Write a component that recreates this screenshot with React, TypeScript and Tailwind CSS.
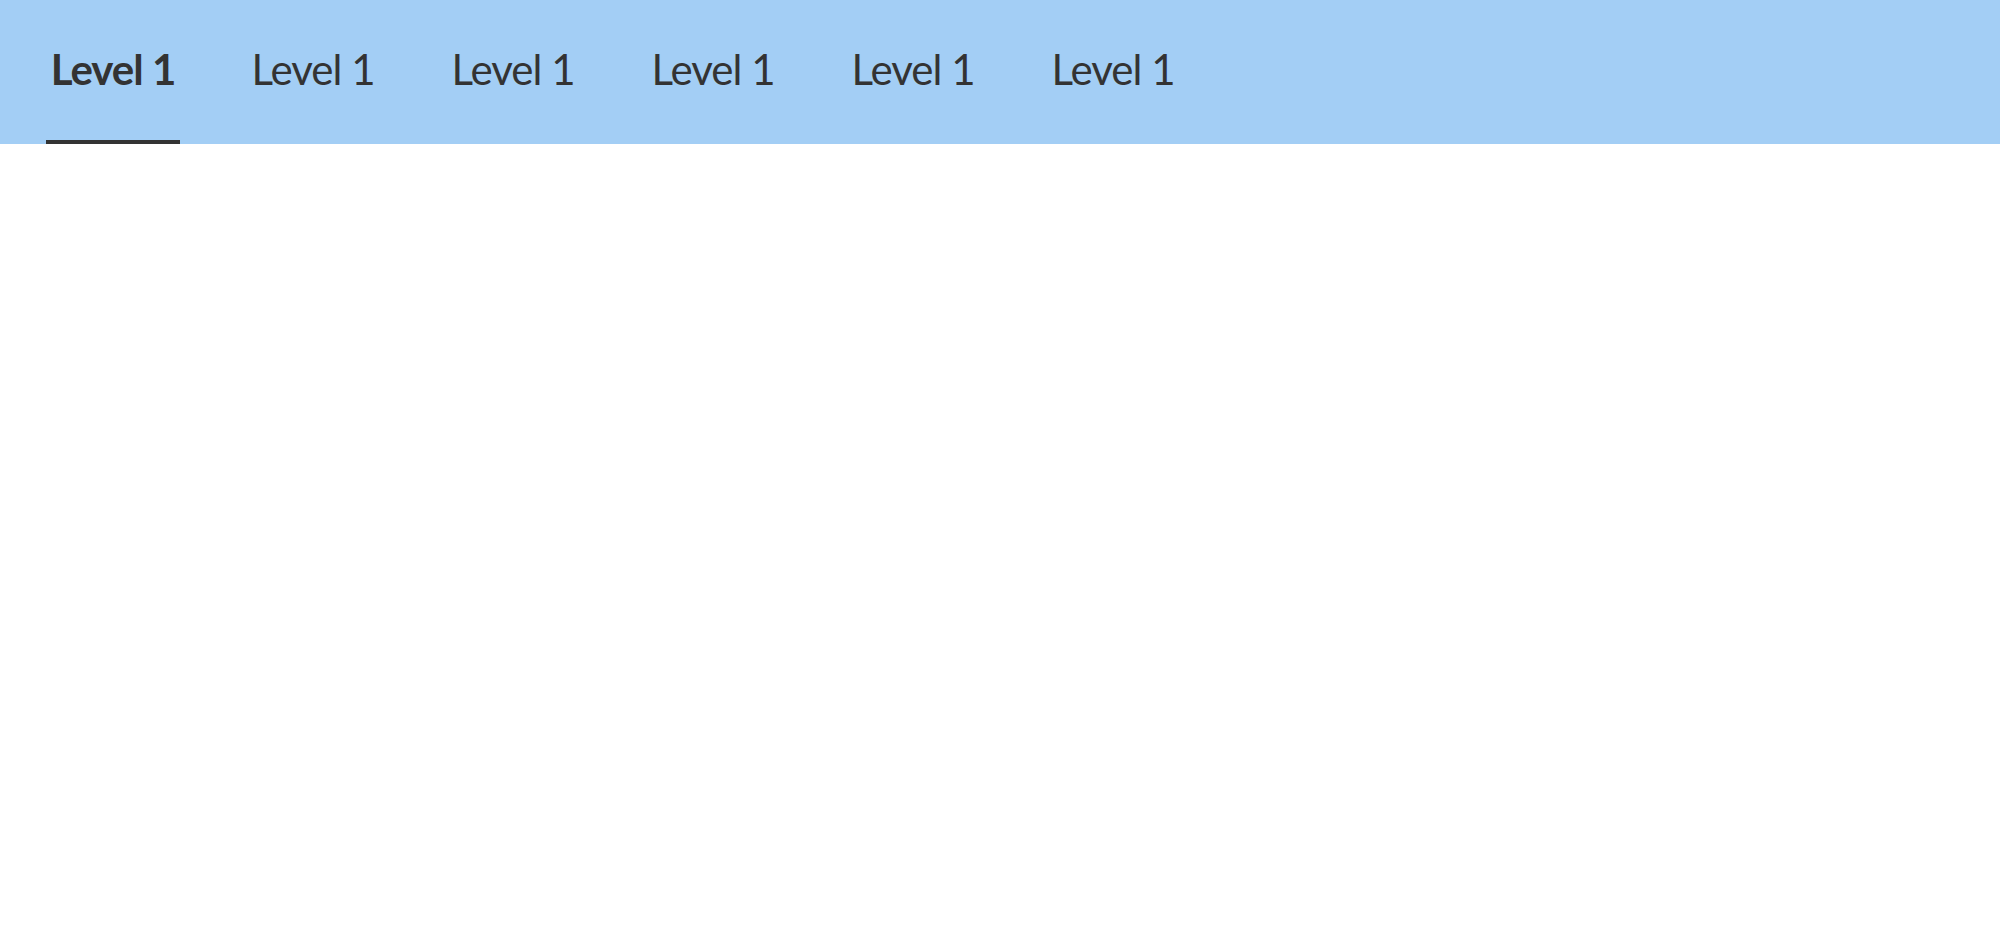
import React, {useState} from "react";

const items = ["Level 1", "Level 1", "Level 1", "Level 1", "Level 1", "Level 1"];

export default function App(): React.JSX.Element {
  const [active, setActive] = useState(0);

  return (
    <div className="min-h-screen bg-white font-['Lato','Noto_Sans',sans-serif]">
      <nav className="flex h-[144px] gap-[66px] bg-[#a3cef5] pl-[46px]">
        {items.map((label, i) => (
          <NavItem key={i} active={i === active} onClick={() => setActive(i)}>
            {label}
          </NavItem>
        ))}
      </nav>
    </div>
  );
}

function NavItem(
  props: {
    children: React.ReactNode;
    active?: boolean;
    onClick?: () => void;
  }
): React.JSX.Element {
  const base = "flex w-[134px] items-center justify-center border-b-4 pb-[2px] text-[42px] leading-none tracking-[-1px] text-[#333333]";
  const klass = props.active
    ? `${base} border-[#333333] font-bold`
    : `${base} border-transparent font-normal`;

  return (
    <button type="button" className={klass} onClick={props.onClick}>
      {props.children}
    </button>
  );
}
